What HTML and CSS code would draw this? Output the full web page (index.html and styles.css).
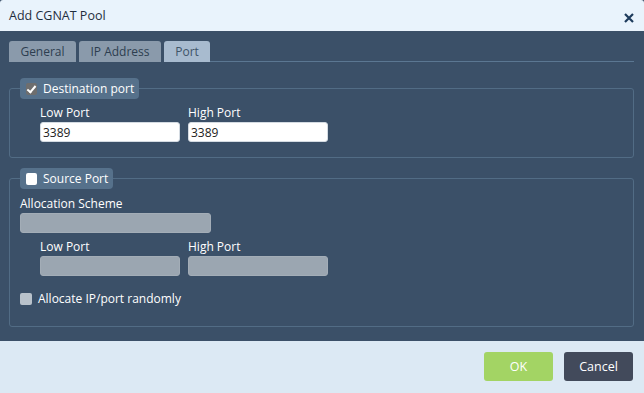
FILE: index.html
```html
<!DOCTYPE html>
<html lang="en">
<head>
    <meta charset="UTF-8">
    <title>Add CGNAT Pool</title>
    <link rel="stylesheet" href="styles.css">
</head>
<body>
    <div class="dialog">
        <div class="dialog-header">
            <span class="dialog-title">Add CGNAT Pool</span>
            <svg class="close" width="10" height="10" viewBox="0 0 10 10">
                <path d="M1 1 L9 9 M9 1 L1 9" stroke="#1d3b5c" stroke-width="2.2" fill="none"/>
            </svg>
        </div>
        <div class="dialog-body">
            <div class="tabs">
                <div class="tab">General</div>
                <div class="tab">IP Address</div>
                <div class="tab active">Port</div>
                <div class="tab-line"></div>
            </div>

            <fieldset class="group">
                <legend><span class="check checked"></span>Destination port</legend>
                <div class="port-row">
                    <div class="field">
                        <label>Low Port</label>
                        <input type="text" value="3389">
                    </div>
                    <div class="field">
                        <label>High Port</label>
                        <input type="text" value="3389">
                    </div>
                </div>
            </fieldset>

            <fieldset class="group second">
                <legend><span class="check"></span>Source Port</legend>
                <div class="field scheme">
                    <label>Allocation Scheme</label>
                    <input type="text" disabled>
                </div>
                <div class="port-row">
                    <div class="field">
                        <label>Low Port</label>
                        <input type="text" disabled>
                    </div>
                    <div class="field">
                        <label>High Port</label>
                        <input type="text" disabled>
                    </div>
                </div>
                <div class="random">
                    <span class="check disabled"></span>Allocate IP/port randomly
                </div>
            </fieldset>
        </div>
        <div class="dialog-footer">
            <button class="btn ok">OK</button>
            <button class="btn cancel">Cancel</button>
        </div>
    </div>
</body>
</html>
```

FILE: styles.css
```css
html, body {
    margin: 0;
    padding: 0;
    background-color: #3b5068;
}
body {
    font-family: "Open Sans", "DejaVu Sans", sans-serif;
    font-size: 12px;
    color: #fff;
}
.dialog {
    width: 644px;
    height: 393px;
    display: flex;
    flex-direction: column;
}
.dialog-header {
    height: 31px;
    flex: none;
    background-color: #e9f3fc;
    display: flex;
    align-items: center;
    justify-content: space-between;
    padding: 0 10px 0 9px;
    box-sizing: border-box;
    border-radius: 3px 3px 0 0;
}
.dialog-title {
    color: #1f2d3d;
    font-size: 12.5px;
}
.close {
    margin-top: 4px;
}
.dialog-body {
    flex: 1;
    background-color: #3b5068;
    padding: 10px 9px 0 9px;
}
.tabs {
    display: flex;
    align-items: flex-end;
    height: 21px;
}
.tab {
    height: 21px;
    line-height: 21px;
    margin-right: 3px;
    background-color: #8a9aab;
    color: #2d3e50;
    font-size: 12px;
    text-align: center;
    white-space: nowrap;
    border-radius: 3px 3px 0 0;
    box-sizing: border-box;
}
.tab:nth-child(1) { width: 67px; }
.tab:nth-child(2) { width: 82px; }
.tab.active {
    background-color: #a8bbcf;
    color: #3f5468;
    width: 46px;
    margin-right: 0;
}
.tab-line {
    flex: 1;
    height: 1px;
    background-color: #5b7792;
    margin-right: 1px;
}
.group {
    border: 1px solid #526c85;
    border-radius: 3px;
    margin: 16px 1px 0 0;
    padding: 0 10px 15px 10px;
}
.group.second {
    margin-top: 10px;
    padding-bottom: 19px;
}
legend {
    background-color: #56718b;
    border-radius: 4px;
    height: 21px;
    line-height: 21px;
    padding: 0 5px 0 6px;
    font-size: 12px;
    display: flex;
    align-items: center;
    gap: 6px;
}
.check {
    display: inline-block;
    width: 11px;
    height: 12px;
    background-color: #fff;
    border-radius: 2px;
    position: relative;
}
.check.checked {
    background-color: #6e6e6e;
}
.check.checked::after {
    content: "";
    position: absolute;
    left: 3px;
    top: 1px;
    width: 3px;
    height: 7px;
    border: solid #fff;
    border-width: 0 2px 2px 0;
    transform: rotate(40deg);
}
.check.disabled {
    background-color: #b9c2cb;
    width: 12px;
    margin-right: 6px;
}
.port-row {
    display: flex;
    gap: 8px;
    margin-left: 20px;
}
.field label {
    display: block;
    font-size: 12px;
    line-height: 16px;
    margin-top: 6px;
    margin-bottom: 1px;
}
.field input {
    width: 140px;
    height: 20px;
    box-sizing: border-box;
    border: 1px solid #d4dbe2;
    border-radius: 3px;
    padding: 0 2px;
    font-family: "Open Sans", "DejaVu Sans", sans-serif;
    font-size: 12px;
    color: #222;
    background-color: #fff;
    outline: none;
}
.field input:disabled {
    background-color: #9ba6b1;
    border-color: #a3adb7;
}
.scheme label {
    margin-top: 7px;
}
.scheme input {
    width: 191px;
}
.random {
    display: flex;
    align-items: center;
    margin-top: 14px;
    font-size: 12px;
}
.dialog-footer {
    height: 52px;
    flex: none;
    background-color: #dce9f4;
    display: flex;
    justify-content: flex-end;
    align-items: flex-start;
    padding: 11px 11px 0 0;
    box-sizing: border-box;
    gap: 11px;
}
.btn {
    width: 69px;
    height: 29px;
    border: none;
    border-radius: 3px;
    font-family: "Open Sans", "DejaVu Sans", sans-serif;
    font-size: 12.5px;
    color: #fff;
}
.btn.ok {
    background-color: #a3d464;
}
.btn.cancel {
    background-color: #424a5b;
}
```
